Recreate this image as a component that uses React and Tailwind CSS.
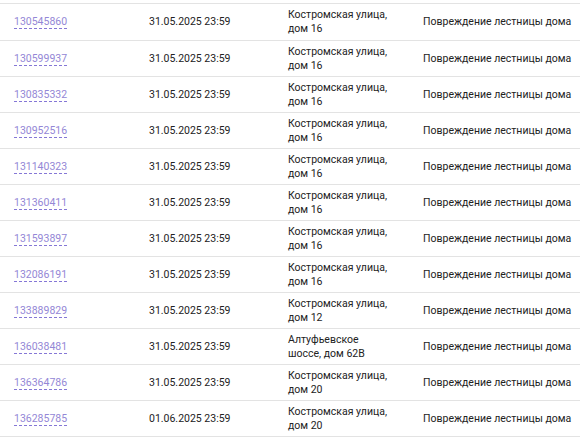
const rows = [
  { id: "130545860", date: "31.05.2025 23:59", addr: ["Костромская улица,", "дом 16"] },
  { id: "130599937", date: "31.05.2025 23:59", addr: ["Костромская улица,", "дом 16"] },
  { id: "130835332", date: "31.05.2025 23:59", addr: ["Костромская улица,", "дом 16"] },
  { id: "130952516", date: "31.05.2025 23:59", addr: ["Костромская улица,", "дом 16"] },
  { id: "131140323", date: "31.05.2025 23:59", addr: ["Костромская улица,", "дом 16"] },
  { id: "131360411", date: "31.05.2025 23:59", addr: ["Костромская улица,", "дом 16"] },
  { id: "131593897", date: "31.05.2025 23:59", addr: ["Костромская улица,", "дом 16"] },
  { id: "132086191", date: "31.05.2025 23:59", addr: ["Костромская улица,", "дом 16"] },
  { id: "133889829", date: "31.05.2025 23:59", addr: ["Костромская улица,", "дом 12"] },
  { id: "136038481", date: "31.05.2025 23:59", addr: ["Алтуфьевское", "шоссе, дом 62В"] },
  { id: "136364786", date: "31.05.2025 23:59", addr: ["Костромская улица,", "дом 20"] },
  { id: "136285785", date: "01.06.2025 23:59", addr: ["Костромская улица,", "дом 20"] },
];

export default function App() {
  return (
    <div
      className="w-[580px] h-[442px] overflow-hidden bg-white pt-[3px] text-[10.5px] text-[#222]"
      style={{ fontFamily: "Roboto, 'Liberation Sans', sans-serif" }}
    >
      {rows.map((r, i) => (
        <div
          key={r.id}
          className={
            "grid grid-cols-[149px_139px_135px_1fr] items-center border-t border-[#e3e3e3] " +
            (i === 0 ? "h-[37px]" : "h-[36px]")
          }
        >
          <div className="pl-[14px]">
            <a
              href="#"
              className="inline-block leading-[12px] text-[#9487d6] border-b border-dashed border-[#8577d6]"
            >
              {r.id}
            </a>
          </div>
          <div>{r.date}</div>
          <div className="leading-[14px]">
            <div>{r.addr[0]}</div>
            <div>{r.addr[1]}</div>
          </div>
          <div>Повреждение лестницы дома</div>
        </div>
      ))}
      <div className="border-t border-[#e3e3e3] h-[36px]" />
    </div>
  );
}
